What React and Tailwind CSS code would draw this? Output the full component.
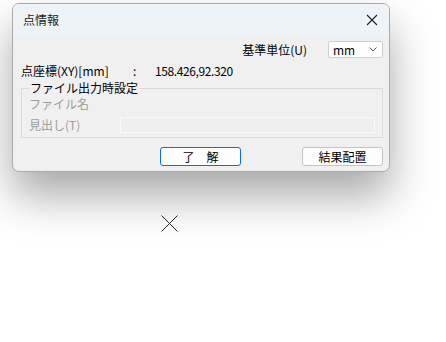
import React from 'react';

const font = { fontFamily: '"Noto Sans CJK JP", "Liberation Sans", sans-serif' };

const App = () => {
  return (
    <div className="relative w-[446px] h-[342px] bg-white overflow-hidden pl-[12px] pt-[3px]" style={font}>
      <div className="w-[378px] h-[169px] rounded-[7px] border border-[#a9a9a9] bg-[#f0f0f0] overflow-hidden flex flex-col shadow-[0_24px_44px_rgba(0,0,0,0.34)]">
        {/* title bar */}
        <div className="h-[32px] bg-[#eef3f8] flex items-center justify-between pl-[10px] pr-[9px] shrink-0">
          <span className="text-[12px] text-[#1b1b1b] leading-none">点情報</span>
          <svg width="12" height="12" viewBox="0 0 12 12" className="mr-[2px]">
            <path d="M1 1L11 11M11 1L1 11" stroke="#222" strokeWidth="1.1" />
          </svg>
        </div>

        <div className="flex flex-col pl-[7px] pr-[6px]">
          {/* unit row */}
          <div className="flex items-center justify-end mt-[5px] h-[17px]">
            <span className="text-[12px] leading-none text-black mr-[21px]">基準単位(U)</span>
            <div className="w-[55px] h-[17px] bg-white border border-[#cfcfcf] rounded-[2px] flex items-center justify-between pl-[4px] pr-[5px]">
              <span className="text-[12px] leading-none text-black">mm</span>
              <svg width="8" height="5" viewBox="0 0 8 5">
                <path d="M0.5 0.5L4 4L7.5 0.5" stroke="#555" strokeWidth="1" fill="none" />
              </svg>
            </div>
          </div>

          {/* coordinate row */}
          <div className="flex items-center h-[14px] mt-[6px] text-[12px] leading-none text-black">
            <span className="w-[113px] pl-[1px]">点座標(XY)[mm]</span>
            <span className="w-[22px]">:</span>
            <span className="tracking-[-0.4px]">158.426,92.320</span>
          </div>

          {/* group box */}
          <div className="relative mt-[10px] ml-[1px] h-[50px] border border-[#d9d9d9] pt-[8px] pl-[7px] pr-[7px]">
            <span className="absolute -top-[8px] left-[7px] bg-[#f0f0f0] px-[1px] text-[12px] leading-[14px] text-black">
              ファイル出力時設定
            </span>
            <div className="text-[12px] leading-none text-[#9c9c9c] h-[14px] flex items-center">ファイル名</div>
            <div className="flex items-center mt-[6px] h-[16px]">
              <span className="w-[91px] text-[12px] leading-none text-[#9c9c9c]">見出し(T)</span>
              <div className="flex-1 h-[16px] border border-[#fafafa] bg-[#efefef]" />
            </div>
          </div>

          {/* buttons */}
          <div className="flex items-center mt-[9px] h-[19px]">
            <button className="ml-[140px] w-[81px] h-[19px] rounded-[3px] border-[1.5px] border-[#0a6fd6] bg-[#fdfdfd] text-[12px] leading-none text-black flex items-center justify-center">
              了　解
            </button>
            <button className="ml-auto w-[81px] h-[19px] rounded-[3px] border border-[#c4c4c4] bg-[#fdfdfd] text-[12px] leading-none text-black flex items-center justify-center">
              結果配置
            </button>
          </div>
        </div>
      </div>

      {/* mouse cursor */}
      <svg className="absolute left-[161px] top-[215px]" width="17" height="17" viewBox="0 0 17 17">
        <path d="M0.5 0.5L16.5 16.5M16.5 0.5L0.5 16.5" stroke="#222" strokeWidth="1" />
      </svg>
    </div>
  );
};

export default App;
